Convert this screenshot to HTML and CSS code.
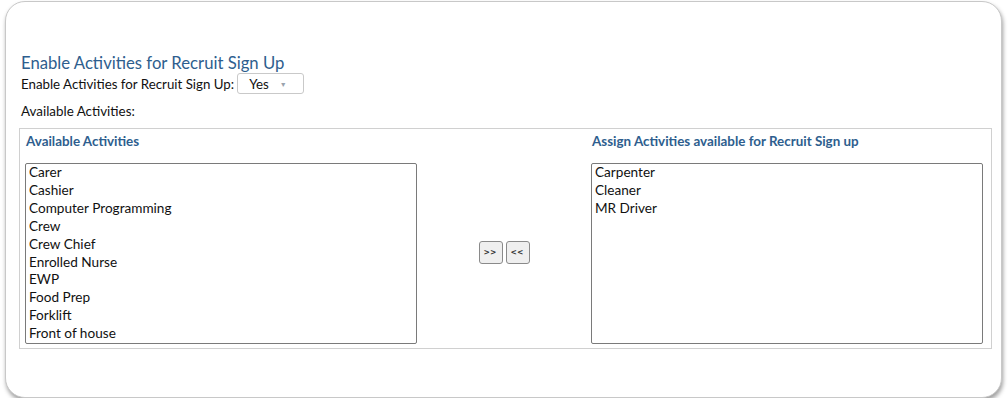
FILE: index.html
```html
<!DOCTYPE html>
<html>
<head>
<meta charset="utf-8">
<link rel="stylesheet" href="styles.css">
</head>
<body>
<div class="card">
  <h2 class="title">Enable Activities for Recruit Sign Up</h2>
  <div class="row">
    <span class="label">Enable Activities for Recruit Sign Up:</span>
    <span class="select">Yes <span class="caret">&#9660;</span></span>
  </div>
  <div class="avail-label">Available Activities:</div>
  <div class="box">
    <div class="col">
      <div class="col-head">Available Activities</div>
      <div class="list">
        <div>Carer</div>
        <div>Cashier</div>
        <div>Computer Programming</div>
        <div>Crew</div>
        <div>Crew Chief</div>
        <div>Enrolled Nurse</div>
        <div>EWP</div>
        <div>Food Prep</div>
        <div>Forklift</div>
        <div>Front of house</div>
      </div>
    </div>
    <div class="mid">
      <button class="btn">&gt;&gt;</button>
      <button class="btn">&lt;&lt;</button>
    </div>
    <div class="col">
      <div class="col-head">Assign Activities available for Recruit Sign up</div>
      <div class="list">
        <div>Carpenter</div>
        <div>Cleaner</div>
        <div>MR Driver</div>
      </div>
    </div>
  </div>
</div>
</body>
</html>
```

FILE: styles.css
```css
html, body {
  margin: 0;
  padding: 0;
  background: #ffffff;
}
body {
  font-family: Lato, "Open Sans", sans-serif;
  color: #111;
  padding: 1px 6px 0 5px;
}
.card {
  height: 397px;
  box-sizing: border-box;
  border: 1px solid #c8c8c8;
  border-radius: 20px;
  box-shadow: 1px 3px 4px rgba(0,0,0,0.38);
  padding: 52px 9px 0 15px;
  background: #fff;
}
.title {
  margin: 0;
  font-size: 16.7px;
  font-weight: 400;
  color: #2e5e8e;
  line-height: 19px;
}
.row {
  display: flex;
  align-items: center;
  height: 21px;
  font-size: 13.3px;
}
.label {
  margin-right: 3px;
}
.select {
  display: inline-flex;
  align-items: center;
  box-sizing: border-box;
  width: 67px;
  height: 21px;
  border: 1px solid #c9c9c9;
  border-radius: 3px;
  padding-left: 11px;
  font-size: 13.3px;
}
.caret {
  font-size: 7px;
  color: #9aa3ad;
  margin-left: 11px;
}
.avail-label {
  font-size: 13.4px;
  margin-top: 10px;
  line-height: 15px;
}
.box {
  margin-top: 9px;
  border: 1px solid #d0d0d0;
  display: flex;
  padding: 5px 8px 4px 5px;
  margin-left: -2px;
}
.col {
  width: 392px;
  display: flex;
  flex-direction: column;
}
.col-head {
  font-size: 13.4px;
  font-weight: 700;
  color: #2e5e8e;
  line-height: 15px;
  margin-bottom: 14px;
  padding-left: 1px;
}
.list {
  height: 181px;
  box-sizing: border-box;
  border: 1px solid #7a7a7a;
  border-radius: 2px;
  font-size: 13.6px;
  line-height: 17.9px;
  padding: 0 3px;
}
.mid {
  flex: 1;
  display: flex;
  justify-content: center;
  align-items: center;
  gap: 3px;
  padding-top: 26px;
}
.btn {
  width: 24px;
  height: 23px;
  padding: 0;
  border: 1px solid #8a8a8a;
  border-radius: 3px;
  background: #efefef;
  font-family: "DejaVu Sans Mono", monospace;
  font-size: 9px;
  font-weight: 700;
  color: #333;
  letter-spacing: 1px;
}
```
